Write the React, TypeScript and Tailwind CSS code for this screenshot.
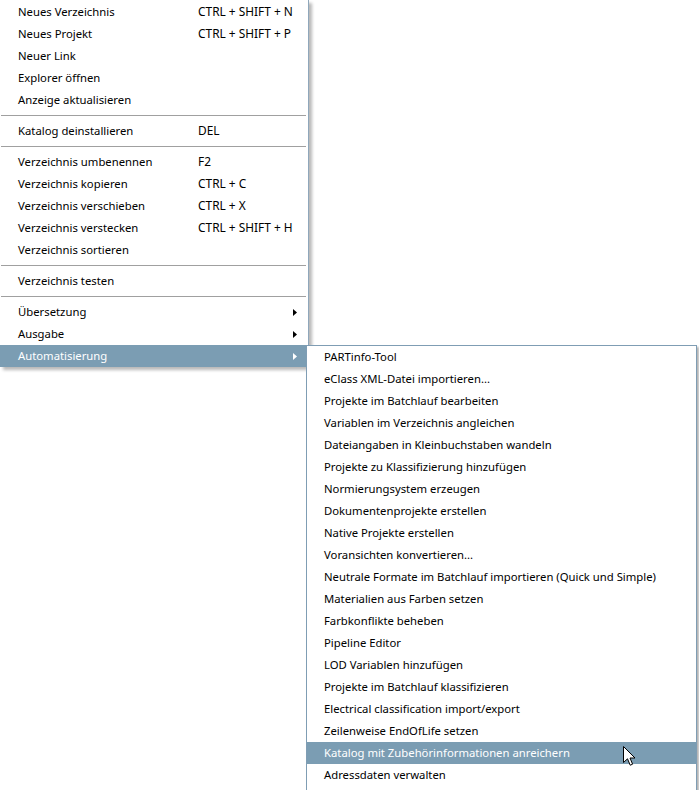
import React from "react";

type Item = { t: string; s?: string; arrow?: boolean; hl?: boolean } | "sep";

const mainItems: Item[] = [
  { t: "Neues Verzeichnis", s: "CTRL + SHIFT + N" },
  { t: "Neues Projekt", s: "CTRL + SHIFT + P" },
  { t: "Neuer Link" },
  { t: "Explorer öffnen" },
  { t: "Anzeige aktualisieren" },
  "sep",
  { t: "Katalog deinstallieren", s: "DEL" },
  "sep",
  { t: "Verzeichnis umbenennen", s: "F2" },
  { t: "Verzeichnis kopieren", s: "CTRL + C" },
  { t: "Verzeichnis verschieben", s: "CTRL + X" },
  { t: "Verzeichnis verstecken", s: "CTRL + SHIFT + H" },
  { t: "Verzeichnis sortieren" },
  "sep",
  { t: "Verzeichnis testen" },
  "sep",
  { t: "Übersetzung", arrow: true },
  { t: "Ausgabe", arrow: true },
  { t: "Automatisierung", arrow: true, hl: true },
];

const subItems: { t: string; hl?: boolean }[] = [
  { t: "PARTinfo-Tool" },
  { t: "eClass XML-Datei importieren..." },
  { t: "Projekte im Batchlauf bearbeiten" },
  { t: "Variablen im Verzeichnis angleichen" },
  { t: "Dateiangaben in Kleinbuchstaben wandeln" },
  { t: "Projekte zu Klassifizierung hinzufügen" },
  { t: "Normierungsystem erzeugen" },
  { t: "Dokumentenprojekte erstellen" },
  { t: "Native Projekte erstellen" },
  { t: "Voransichten konvertieren..." },
  { t: "Neutrale Formate im Batchlauf importieren (Quick und Simple)" },
  { t: "Materialien aus Farben setzen" },
  { t: "Farbkonflikte beheben" },
  { t: "Pipeline Editor" },
  { t: "LOD Variablen hinzufügen" },
  { t: "Projekte im Batchlauf klassifizieren" },
  { t: "Electrical classification import/export" },
  { t: "Zeilenweise EndOfLife setzen" },
  { t: "Katalog mit Zubehörinformationen anreichern", hl: true },
  { t: "Adressdaten verwalten" },
];

function Arrow({ white }: { white?: boolean }) {
  return (
    <svg width="4" height="7" viewBox="0 0 4 7">
      <path d="M0 0 L4 3.5 L0 7 Z" fill={white ? "#ffffff" : "#000000"} />
    </svg>
  );
}

export default function App() {
  return (
    <div
      className="relative h-[790px] w-[699px] overflow-hidden bg-white text-[11.3px] text-black"
      style={{ fontFamily: '"Noto Sans", "Liberation Sans", sans-serif' }}
    >
      <div className="flex w-[309px] flex-col border-r border-[#8fa7bb] bg-white pt-[1px] shadow-[3px_3px_3px_rgba(0,0,0,0.28)]">
        {mainItems.map((it, i) =>
          it === "sep" ? (
            <div key={i} className="flex h-[9px] items-center pl-[1px] pr-[2px]">
              <div className="h-px w-full bg-[#a0a0a0]" />
            </div>
          ) : (
            <div
              key={i}
              className={`grid h-[22px] grid-cols-[180px_1fr_auto] items-center whitespace-nowrap pl-[18px] pr-[11px] ${
                it.hl ? "bg-[#7b9db3] text-white" : ""
              }`}
            >
              <span>{it.t}</span>
              <span className="text-[11.9px]">{it.s ?? ""}</span>
              {it.arrow ? <Arrow white={it.hl} /> : <span />}
            </div>
          )
        )}
      </div>

      <div className="absolute left-[306px] top-[345px] flex w-[391px] flex-col border border-[#7f9db4] bg-white pb-[4px] shadow-[2px_2px_2px_rgba(0,0,0,0.3)]">
        {subItems.map((it, i) => (
          <div
            key={i}
            className={`flex h-[22px] items-center whitespace-nowrap pl-[17px] ${
              it.hl ? "bg-[#7b9db3] text-white" : ""
            }`}
          >
            {it.t}
          </div>
        ))}
      </div>

      <svg
        width="13"
        height="21"
        viewBox="0 0 13 21"
        className="absolute left-[623px] top-[746px]"
      >
        <path
          d="M0.5 0.5 L0.5 16.5 L4.5 12.8 L7.2 19.2 L9.6 18.2 L7 12 L12 12 Z"
          fill="#ffffff"
          stroke="#000000"
          strokeWidth="1"
          strokeLinejoin="miter"
        />
      </svg>
    </div>
  );
}
